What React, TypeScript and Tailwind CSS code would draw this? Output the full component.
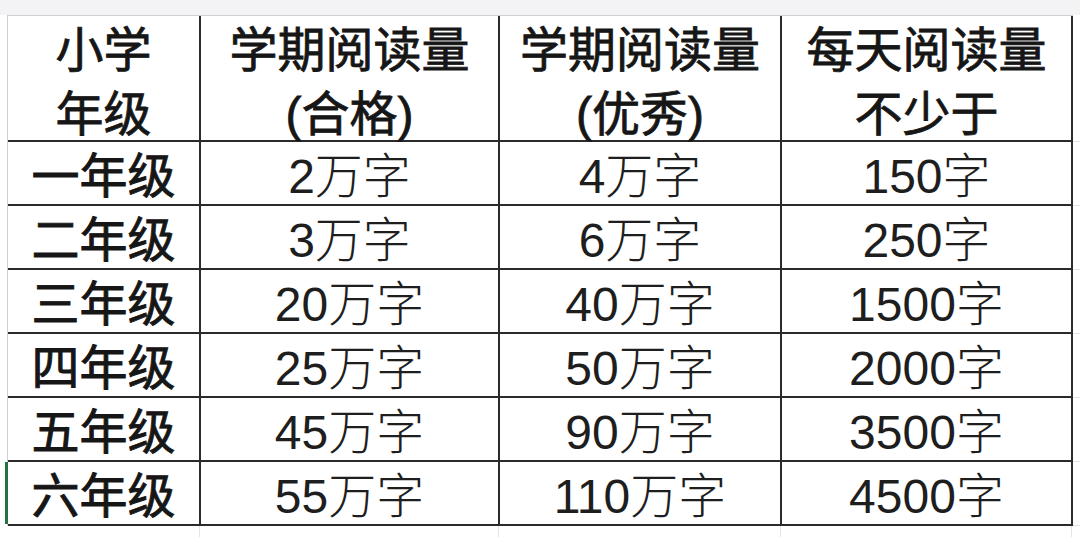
import React from "react";

const rows = [
  { grade: "一年级", pass: "2万字", good: "4万字", daily: "150字" },
  { grade: "二年级", pass: "3万字", good: "6万字", daily: "250字" },
  { grade: "三年级", pass: "20万字", good: "40万字", daily: "1500字" },
  { grade: "四年级", pass: "25万字", good: "50万字", daily: "2000字" },
  { grade: "五年级", pass: "45万字", good: "90万字", daily: "3500字" },
  { grade: "六年级", pass: "55万字", good: "110万字", daily: "4500字" },
];

const headers = [
  ["小学", "年级"],
  ["学期阅读量", "(合格)"],
  ["学期阅读量", "(优秀)"],
  ["每天阅读量", "不少于"],
];

const font = { fontFamily: '"Liberation Sans", "Noto Sans CJK SC", sans-serif' };

function HeaderCell({ lines }: { lines: string[] }) {
  return (
    <div className="bg-white flex flex-col items-center justify-center pt-[10px] text-[48px] leading-[64px] font-normal text-[#161616] [-webkit-text-stroke:0.8px_#161616] overflow-visible">
      {lines.map((l, i) => (
        <span key={i} className="whitespace-nowrap">
          {l}
        </span>
      ))}
    </div>
  );
}

export default function App() {
  return (
    <div className="w-[1080px] h-[537px] bg-white overflow-hidden" style={font}>
      <div className="h-[15px] bg-[#f3f3f5]" />
      <div className="flex pl-[7px]">
        <div className="grid grid-cols-[191px_297px_280px_289px] grid-rows-[124px_repeat(6,62px)] gap-[2px] bg-[#2b2b2b] border-l border-t border-[#cfcfcf] pr-[2px] pb-[2px]">
          {headers.map((h, i) => (
            <HeaderCell key={i} lines={h} />
          ))}
          {rows.map((r, i) => (
            <React.Fragment key={r.grade}>
              <div className="relative bg-white flex items-center justify-center pt-[8px] text-[48px] font-normal text-[#161616] [-webkit-text-stroke:0.9px_#161616] whitespace-nowrap">
                {i === rows.length - 1 && (
                  <span className="absolute left-[-3px] top-0 bottom-0 w-[3px] bg-[#217346]" />
                )}
                {r.grade}
              </div>
              <div className="bg-white flex items-center justify-center pt-[8px] text-[48px] font-light text-[#1e1e1e] whitespace-nowrap">
                {r.pass}
              </div>
              <div className="bg-white flex items-center justify-center pt-[8px] text-[48px] font-light text-[#1e1e1e] whitespace-nowrap">
                {r.good}
              </div>
              <div className="bg-white flex items-center justify-center pt-[8px] text-[48px] font-light text-[#1e1e1e] whitespace-nowrap">
                {r.daily}
              </div>
            </React.Fragment>
          ))}
        </div>
        <div className="flex-1 flex flex-col pt-[1px]">
          <div className="h-[126px] border-b border-[#e4e4e4]" />
          {rows.map((r) => (
            <div key={r.grade} className="h-[64px] border-b border-[#e4e4e4]" />
          ))}
        </div>
      </div>
      <div className="flex pl-[8px] h-[12px]">
        <div className="w-[192px] border-r border-[#e4e4e4]" />
        <div className="w-[299px] border-r border-[#e4e4e4]" />
        <div className="w-[282px] border-r border-[#e4e4e4]" />
        <div className="w-[291px] border-r border-[#e4e4e4]" />
      </div>
    </div>
  );
}
